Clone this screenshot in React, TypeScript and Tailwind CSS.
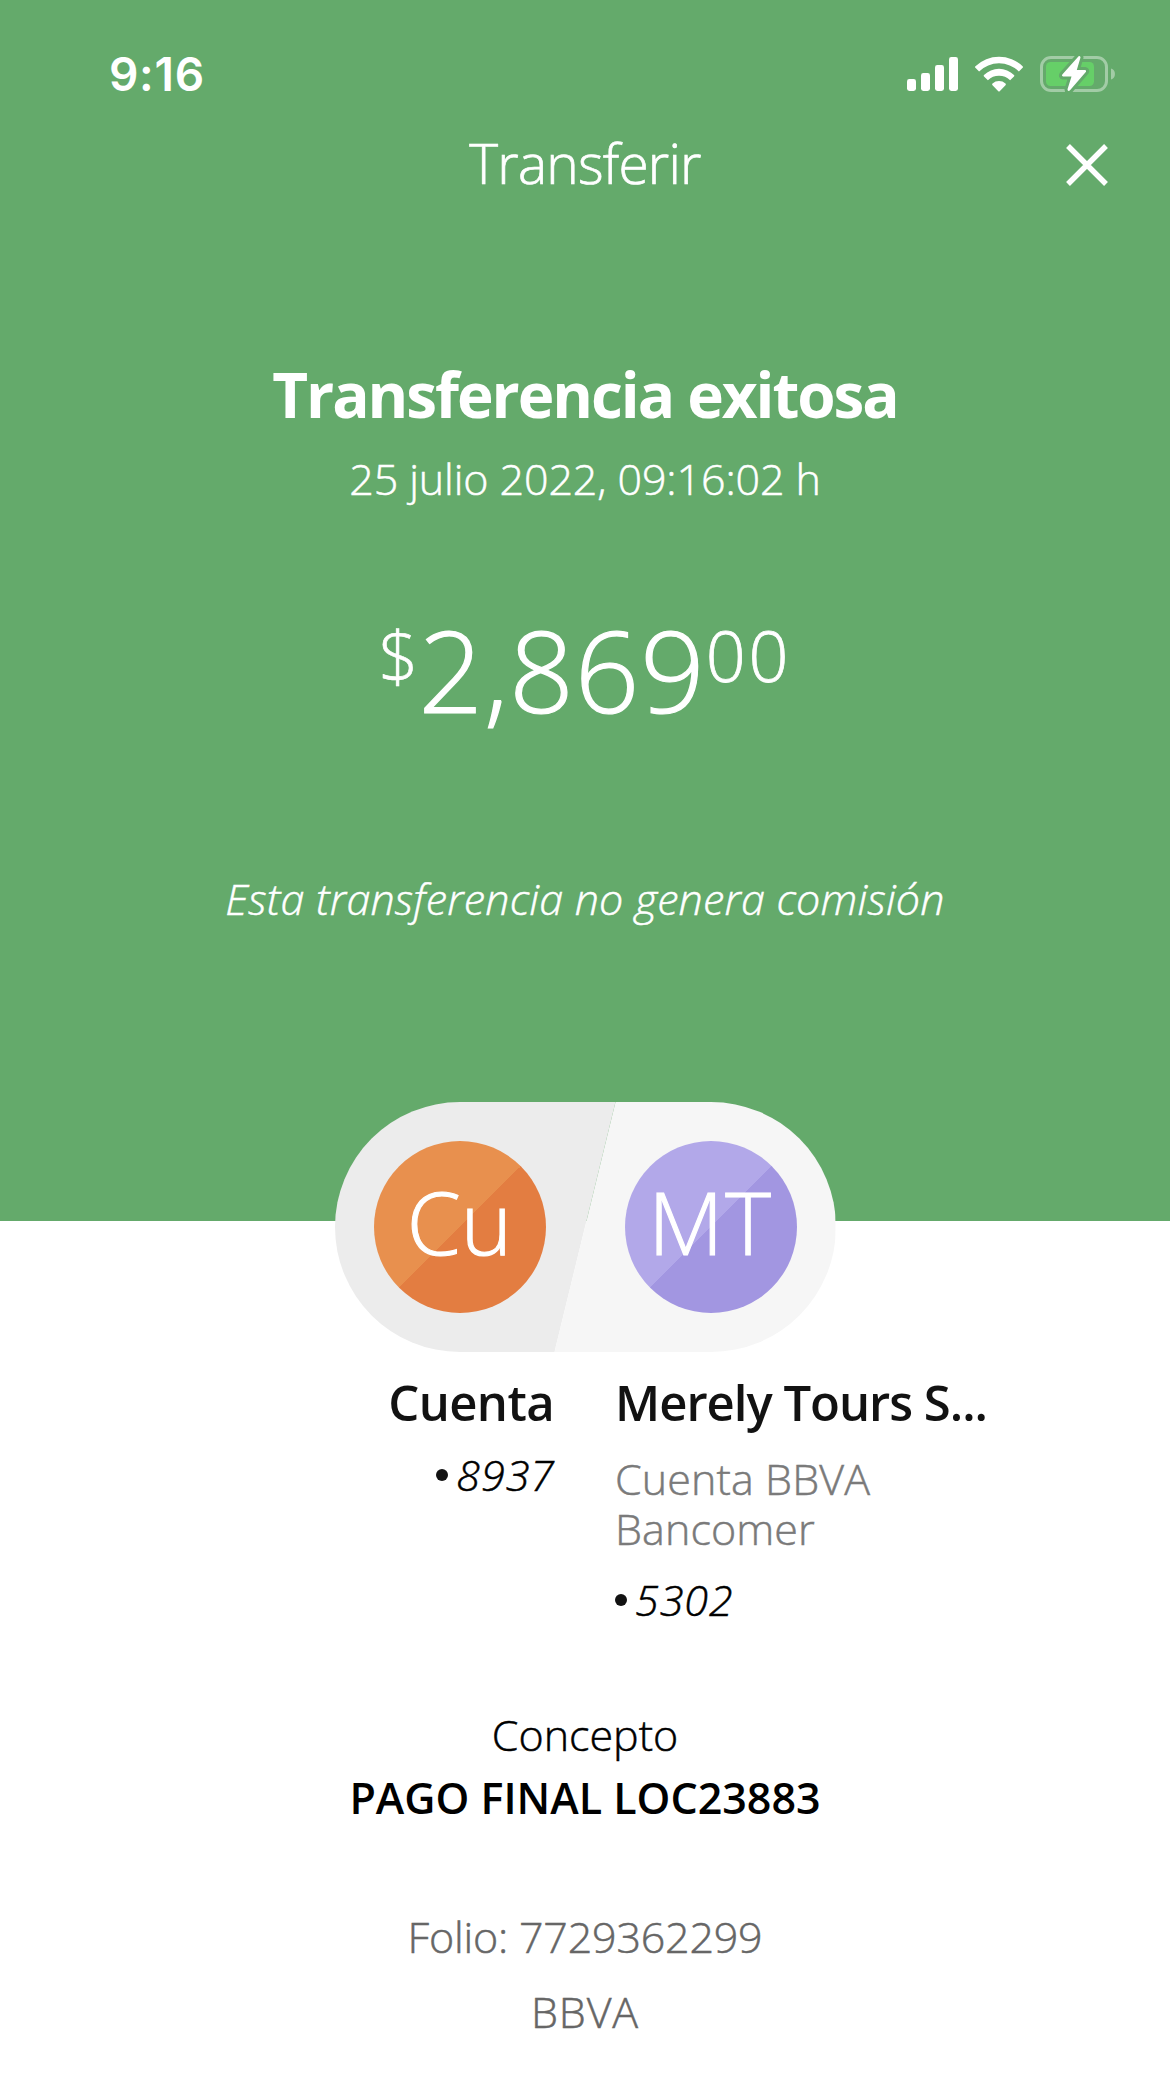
import React from "react";

const transfer = {
  title: "Transferencia exitosa",
  date: "25 julio 2022, 09:16:02 h",
  amount: "2,869",
  cents: "00",
  fee: "Esta transferencia no genera comisión",
  concept: "PAGO FINAL LOC23883",
  folio: "7729362299",
  bank: "BBVA",
};

const StatusIcons = () => (
  <div className="flex items-center text-white">
    <svg className="w-[52px] h-[36px]" viewBox="0 0 52 36" fill="currentColor">
      <rect x="0" y="23" width="9" height="12" rx="2.4" />
      <rect x="14" y="17" width="9" height="18" rx="2.4" />
      <rect x="28" y="9" width="9" height="26" rx="2.4" />
      <rect x="42" y="1" width="9" height="34" rx="2.4" />
    </svg>
    <svg className="ml-4 w-[48px] h-[36px]" viewBox="0 0 48 36" fill="currentColor">
      <path d="M0.4 10.2 A34 34 0 0 1 47.6 10.2 Q48.4 11 47.6 11.8 L43.9 15.4 A28.4 28.4 0 0 0 4.1 15.4 L0.4 11.8 Q-0.4 11 0.4 10.2Z" />
      <path d="M9 18.9 A21.5 21.5 0 0 1 39 18.9 Q39.8 19.6 39 20.4 L35.1 24.2 A16 16 0 0 0 12.9 24.2 L9 20.4 Q8.2 19.6 9 18.9Z" />
      <path d="M17.5 27.5 A10 10 0 0 1 30.5 27.5 Q31.4 28.3 30.5 29.2 L24.7 35.2 Q24 35.9 23.3 35.2 L17.5 29.2 Q16.6 28.3 17.5 27.5Z" />
    </svg>
    <svg className="ml-[17px] w-[76px] h-[40px]" viewBox="0 0 76 40">
      <rect x="1.5" y="3.5" width="65" height="33" rx="9.5" fill="none" stroke="#fff" strokeOpacity="0.4" strokeWidth="3" />
      <path d="M71 14.5 A5.8 5.8 0 0 1 71 25.5Z" fill="#fff" fillOpacity="0.4" />
      <rect x="6" y="8" width="48" height="24" rx="4.5" fill="#66cf68" />
      <path
        d="M38.6 2.2 L22.3 20.6 Q21.3 22.3 23 22.5 H31.5 L27.5 35.3 Q27.6 38 29.8 36.6 L46 17.8 Q46.6 16.2 45 16 H36.8 L40.5 3.4 Q40.3 1.2 38.6 2.2Z"
        fill="#fff"
        stroke="#64aa6b"
        strokeWidth="6"
        strokeLinejoin="round"
        paintOrder="stroke"
      />
    </svg>
  </div>
);

const CloseIcon = () => (
  <svg className="size-[42px]" viewBox="0 0 42 42" fill="none" stroke="#fff" strokeWidth="5.4">
    <path d="M2 2 L40 40 M40 2 L2 40" />
  </svg>
);

const Accounts = () => (
  <div className="relative flex justify-center -mt-[119px] text-white text-[87px] leading-none font-light [-webkit-text-stroke:1.1px]">
    <div className="flex items-center w-[281px] h-[250px] pl-[39px] rounded-l-[125px] bg-[#ececec] [clip-path:polygon(0_0,100%_0,220px_100%,0_100%)]">
      <div className="flex items-center justify-center size-[172px] pb-3 rounded-full bg-[linear-gradient(135deg,#e8904e_50%,#e37d41_50%)]">
        <span>Cu</span>
      </div>
    </div>
    <div className="flex items-center justify-end w-[281px] h-[250px] pr-[39px] -ml-[61px] rounded-r-[125px] bg-[#f6f6f6] [clip-path:polygon(61px_0,100%_0,100%_100%,0_100%)]">
      <div className="flex items-center justify-center size-[172px] pb-3 rounded-full bg-[linear-gradient(135deg,#b2a8e9_50%,#a296e1_50%)]">
        <span className="tracking-[2px]">MT</span>
      </div>
    </div>
  </div>
);

interface AccountNumberProps {
  digits: string;
}

const AccountNumber: React.FC<AccountNumberProps> = ({ digits }) => (
  <p className="flex items-center gap-x-[8px] text-[43px] leading-[50px] tracking-[1px] font-light italic text-black [-webkit-text-stroke:0.5px]">
    <span className="size-3 rounded-full bg-[#121212]" />
    {digits}
  </p>
);

export default function App() {
  return (
    <div className="w-[1170px] h-[2077px] overflow-hidden bg-white font-['Open_Sans',sans-serif]">
      <section className="h-[1221px] bg-[#64aa6b] text-white flex flex-col">
        <div className="h-[111px] pt-[37px] pl-[109px] pr-[54px] flex items-center justify-between">
          <span className="font-['Inter',sans-serif] font-semibold text-[46px] leading-[48px] tracking-[0.7px]">9:16</span>
          <StatusIcons />
        </div>
        <div className="h-[108px] px-[62px] flex items-center justify-between">
          <div className="size-[42px]" />
          <h1 className="pb-[5px] text-[55px] leading-[60px] tracking-[-0.8px] font-light [-webkit-text-stroke:0.7px]">Transferir</h1>
          <button aria-label="Cerrar">
            <CloseIcon />
          </button>
        </div>
        <div className="flex flex-col items-center whitespace-nowrap">
          <h2 className="mt-[139px] text-[62px] leading-[72px] tracking-[-2.05px] font-bold">{transfer.title}</h2>
          <p className="mt-[19px] text-[43px] leading-[60px] tracking-[-0.1px] font-light [-webkit-text-stroke:0.5px]">{transfer.date}</p>
          <p className="mt-[100px] h-[120px] flex items-start font-light">
            <span className="text-[70px] leading-[92px] [-webkit-text-stroke:0.6px]">$</span>
            <span className="text-[113px] leading-[120px] tracking-[1px] [-webkit-text-stroke:1.2px]">{transfer.amount}</span>
            <span className="text-[70px] leading-[92px] tracking-[3px] [-webkit-text-stroke:0.8px]">{transfer.cents}</span>
          </p>
          <p className="mt-[140px] text-[43px] leading-[60px] tracking-[0.2px] font-light italic [-webkit-text-stroke:0.5px]">{transfer.fee}</p>
        </div>
      </section>

      <Accounts />

      <section className="mt-[20px] flex gap-x-[61px] whitespace-nowrap">
        <div className="w-[555px] flex flex-col items-end">
          <h3 className="pr-px text-[49px] leading-[60px] tracking-[-0.6px] font-semibold text-[#121212]">Cuenta</h3>
          <div className="mt-[18px]">
            <AccountNumber digits="8937" />
          </div>
        </div>
        <div className="-ml-px flex flex-col items-start">
          <h3 className="text-[49px] leading-[60px] tracking-[-1px] font-semibold text-[#121212]">Merely Tours S...</h3>
          <p className="mt-[22px] w-[300px] whitespace-normal text-[43px] leading-[50px] tracking-[0.1px] font-light text-[#7a7a7a] [-webkit-text-stroke:0.5px]">
            Cuenta BBVA Bancomer
          </p>
          <div className="mt-[21px]">
            <AccountNumber digits="5302" />
          </div>
        </div>
      </section>

      <section className="mt-[80px] flex flex-col items-center text-[43px] leading-[60px] font-light whitespace-nowrap">
        <p className="text-black [-webkit-text-stroke:0.5px]">Concepto</p>
        <p className="mt-[3px] font-semibold text-black">{transfer.concept}</p>
        <p className="mt-[79px] tracking-[-0.2px] text-[#666] [-webkit-text-stroke:0.5px]">Folio: {transfer.folio}</p>
        <p className="mt-[15px] tracking-[0.8px] text-[#666] [-webkit-text-stroke:0.5px]">{transfer.bank}</p>
      </section>
    </div>
  );
}
